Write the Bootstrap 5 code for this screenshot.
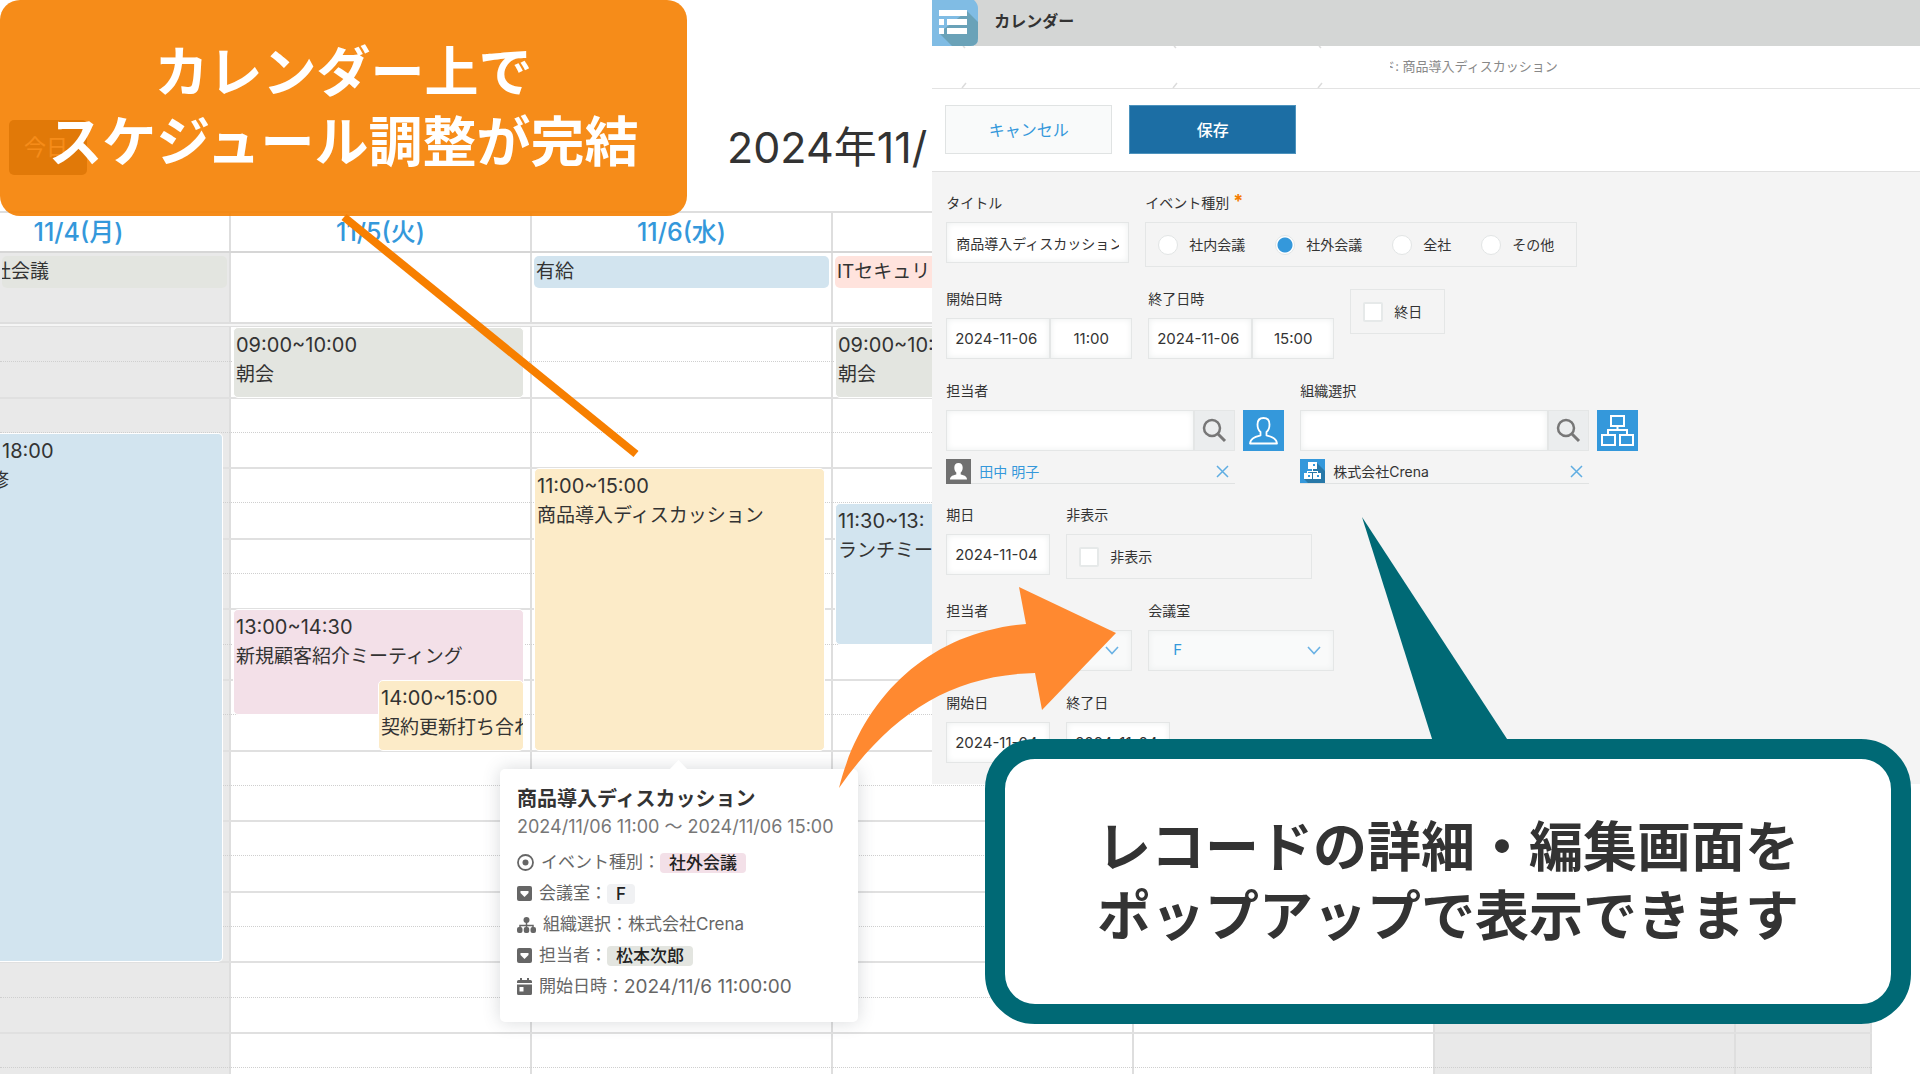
<!DOCTYPE html>
<html lang="ja">
<head>
<meta charset="utf-8">
<meta name="viewport" content="width=device-width, initial-scale=1">
<title>カレンダー</title>
<link href="https://cdn.jsdelivr.net/npm/bootstrap@5.3.0/dist/css/bootstrap.min.css" rel="stylesheet">
<style>
  :root { --line:#dedede; --accent:#3498db; --ink:#333; --teal:#006975; }
  body { font-family: Inter, "Noto Sans CJK JP", sans-serif; color: var(--ink); background:#fff; }
  .stage { min-height: 100vh; overflow: hidden; }

  /* calendar */
  .cal { width: 97.5%; }
  .cal-toolbar { height: 211px; padding-left: 9px; }
  .today-btn { width: 78px; height: 55px; margin-top: 120px; font-size: 22px; padding: 0 4px 0 0; background:#2c3e50; color:#fff; border:0; border-radius:5px; }
  .cal-title { font-size: 43px; line-height: 48px; margin: 123px 0 0 640px; font-weight: 400; white-space: nowrap; }
  .day-cols { display: grid; grid-template-columns: 231fr 301fr 301fr 301fr 301fr 301fr 136fr; }
  .day-cell { border-right: 2px solid var(--line); min-width: 0; }
  .day-cell:last-child { border-right: 0; }
  .day-off { background:#e9e9e9; }
  .day-head { height: 42px; border-top: 2px solid var(--line); border-bottom: 2px solid #d6d6d6; }
  .day-head .day-cell { text-align: center; font-size: 25px; line-height: 38px; }
  .day-head a { color: var(--accent); font-weight: 500; text-decoration: none; }
  .day-head .first-day { padding-right: 72px; }
  .allday { height: 69px; }
  .allday .day-cell { padding: 3px 2px 0 2px; }
  .cal-split { height: 5px; background:#f5f5f5; border-top: 2px solid var(--line); border-bottom: 1px solid var(--line); }
  .ev { font-size: 19px; line-height: 29px; border-radius: 5px; padding: 3px 2px 0 2px; white-space: nowrap; overflow: hidden; }
  .ev-day { height: 32px; padding-top: 1px; }
  .ev-time { font-size: 20px; }
  .ev-gray { background:#e3e5e0; } .ev-blue { background:#d2e4ef; } .ev-peach { background:#ffe3dd; }
  .ev-pink { background:#f3e0e8; } .ev-cream { background:#fcebc8; }
  .timegrid { height: 747px; }
  .slots, .time-col { display: grid; grid-template-rows: repeat(20, 1fr) 35px 6px; }
  .slots { margin-top: -1px; }
  .time-col { padding: 0 9px 0 2px; }
  .time-col .ev { grid-column: 1; border: 1px solid #fff; margin-right: -1px; }
  .ev-half { margin-left: 50%; }
  .time-col.first-day .ev { margin-left: -2px; border-left: 0; border-radius: 0 5px 5px 0; }
  .cut-word { margin-left: -12px; }
  .slots div { border-top: 1px dotted #cfcfcf; }
  .slots div.hour { border-top: 2px solid #e0e0e0; }
  .slots div:first-child { border-top: 0; }

  /* event detail popover */
  .detail { width: 358px; left: 500px; top: 769px; padding: 16px 10px 20px 17px; background:#fff; border-radius: 5px; box-shadow: 0 0 18px rgba(60,70,80,.2); font-size: 17px; color:#666; white-space: nowrap; }
  .detail-tip { left: 169px; top: -9px; }
  .detail h2 { font-size: 20px; line-height: 28px; font-weight: 700; margin: 0; color: var(--ink); }
  .detail-when { font-size: 18px; line-height: 28px; color:#777; margin-bottom: 6px; }
  .detail li { height: 31px; line-height: 31px; }
  .detail svg { margin-right: 7px; flex: none; }
  .detail-num { font-size: 19px; }
  .tagv { line-height: 20px; border-radius: 4px; padding: 0 9px; color: #222; font-weight: 500; }

  /* record dialog */
  .dialog { width: calc(51.5% - 1px); background:#f4f4f4; }
  .dialog-bar { height: 46px; background:#d4d6d5; }
  .dialog-bar h1 { font-size: 16px; line-height: 42px; height: 46px; margin: 0 0 0 16px; font-weight: 700; }
  .crumbs { height: 43px; background:#fff; border-bottom: 1px solid #e3e3e3; font-size: 13px; color:#888; padding-left: 458px; line-height: 41px; }
  .crumb-cut { width: 5px; overflow: hidden; direction: rtl; }
  .actions { height: 83px; background:#fff; border-bottom: 1px solid #e0e0e0; padding: 16px 13px; gap: 17px; }
  .actions .btn { width: 167px; height: 49px; border-radius: 0; font-size: 16px; }
  .btn-cancel, .btn-cancel:hover { background:#f9fafa; border: 1px solid #e0e3e3; color: var(--accent); }
  .btn-save, .btn-save:hover { background:#1c6ea4; border: 1px solid #4d93bd; color:#fff; font-weight: 500; }
  .rec-form { padding: 21px 14px 21px; gap: 22px; font-size: 14px; }
  .frow { gap: 16px; }
  .flabel { font-size: 14px; line-height: 20px; margin: 0 0 9px; display: block; }
  .need { color:#f57c00; font-weight: 700; font-size: 18px; line-height: 16px; vertical-align: top; }
  .fbox { height: 41px; border: 1px solid #e4e6e6; border-radius: 0; background:#fff; color: var(--ink); box-shadow: inset 0 0 6px #eceeee; font-size: 15px; padding: 0 8px; display:block; }
  .w-title { width: 183px; font-size: 14px; padding: 0 9px; }
  .w-date { width: 104px; } .w-time { width: 82px; text-align: center; }
  .w-find { width: 248px; } .w-pick { width: 338px; }
  .fgroup { height: 45px; border: 1px solid #e4e6e6; padding: 0 22px 0 12px; }
  .choice { gap: 11px; line-height: 20px; }
  .choices { gap: 30px; }
  .rad, .chk { appearance: none; width: 20px; height: 20px; margin: 0; background:#fff; border: 1px solid #e2e5e5; flex: none; }
  .rad { border-radius: 50%; }
  .rad:checked { background: radial-gradient(circle, var(--accent) 0 7px, #fff 8px); }
  .chk { border: 2px solid #e6e9e9; border-radius: 2px; }
  .w-hide { width: 246px; }
  .btn-find { width: 41px; height: 41px; background:#ebedee; border: 1px solid #e4e6e6; padding: 0; }
  .btn-blue { width: 41px; height: 41px; background: var(--accent); border: 0; padding: 0; margin-left: 8px; }
  .picked { height: 25px; width: 289px; margin-top: 8px; margin-bottom: -1px; border-bottom: 1px solid #e0e2e2; padding-right: 6px; }
  .picked svg { display:block; }
  .btn-x { border:0; background:none; padding:0; }
  .fsel { width: 186px; }
  .fsel select { appearance: none; width: 100%; background:#f9fafa; color: var(--accent); padding-left: 24px; }
  .fsel svg { right: 13px; top: 16px; }

  /* callouts */
  .call-top { width: 687px; height: 216px; border-radius: 20px; background: rgba(245,127,0,.9); color:#fff; font-size: 54px; line-height: 70px; font-weight: 700; white-space: nowrap; }
  .call-rec { width: 926px; height: 285px; right: 9px; top: 739px; border: 20px solid var(--teal); border-radius: 50px; background:#fff; font-size: 54px; line-height: 69px; font-weight: 700; white-space: nowrap; }
  .marks { pointer-events: none; }
</style>
</head>
<body>
<main class="stage position-relative">

  <section class="cal">
    <header class="cal-toolbar d-flex align-items-start">
      <button class="today-btn" type="button">今日</button>
      <h2 class="cal-title">2024年11/</h2>
    </header>

    <div class="day-cols day-head">
      <div class="day-cell first-day"><a href="#">11/4(月)</a></div>
      <div class="day-cell"><a href="#">11/5(火)</a></div>
      <div class="day-cell"><a href="#">11/6(水)</a></div>
      <div class="day-cell"></div><div class="day-cell"></div><div class="day-cell"></div><div class="day-cell"></div>
    </div>

    <div class="day-cols allday">
      <div class="day-cell day-off first-day"><div class="ev ev-day ev-gray"><div class="cut-word">社会議</div></div></div>
      <div class="day-cell"></div>
      <div class="day-cell"><div class="ev ev-day ev-blue">有給</div></div>
      <div class="day-cell"><div class="ev ev-day ev-peach">ITセキュリ</div></div>
      <div class="day-cell"></div><div class="day-cell day-off"></div><div class="day-cell day-off"></div>
    </div>
    <div class="cal-split"></div>

    <div class="timegrid day-cols position-relative">
      <div class="day-cell day-off"></div><div class="day-cell"></div><div class="day-cell"></div><div class="day-cell"></div><div class="day-cell"></div><div class="day-cell day-off"></div><div class="day-cell day-off"></div>
      <div class="slots position-absolute top-0 start-0 w-100 h-100" id="slots"></div>
      <div class="day-cols position-absolute top-0 start-0 w-100 h-100">
        <div class="time-col first-day">
          <div class="ev ev-blue" style="grid-row:4/19"><div class="ev-time">18:00</div><div class="cut-word">修</div></div>
        </div>
        <div class="time-col">
          <div class="ev ev-gray" style="grid-row:1/3"><div class="ev-time">09:00~10:00</div>朝会</div>
          <div class="ev ev-pink" style="grid-row:9/12"><div class="ev-time">13:00~14:30</div>新規顧客紹介ミーティング</div>
          <div class="ev ev-cream ev-half" style="grid-row:11/13"><div class="ev-time">14:00~15:00</div>契約更新打ち合わ</div>
        </div>
        <div class="time-col">
          <div class="ev ev-cream" style="grid-row:5/13"><div class="ev-time">11:00~15:00</div>商品導入ディスカッション</div>
        </div>
        <div class="time-col">
          <div class="ev ev-gray" style="grid-row:1/3"><div class="ev-time">09:00~10:</div>朝会</div>
          <div class="ev ev-blue" style="grid-row:6/10"><div class="ev-time">11:30~13:</div>ランチミー</div>
        </div>
      </div>
    </div>
  </section>

  <section class="detail position-absolute">
    <svg class="detail-tip position-absolute" width="19" height="10" viewBox="0 0 19 10"><path d="M0 10 9.500 0 19 10z" fill="#fff"/></svg>
    <h2>商品導入ディスカッション</h2>
    <div class="detail-when">2024/11/06 11:00 ～ 2024/11/06 15:00</div>
    <ul class="list-unstyled mb-0">
      <li class="d-flex align-items-center"><svg width="17" height="17" viewBox="0 0 17 17"><circle cx="8.500" cy="8.500" r="7.500" fill="none" stroke="#666" stroke-width="1.800"/><circle cx="8.500" cy="8.500" r="3" fill="#666"/></svg>イベント種別：<span class="tagv ev-pink">社外会議</span></li>
      <li class="d-flex align-items-center"><svg width="15" height="15" viewBox="0 0 15 15"><rect width="15" height="15" rx="2" fill="#666"/><path d="M3.500 5h8v2l-4 4-4-4z" fill="#fff"/></svg>会議室：<span class="tagv" style="background:#f0f1f3">F</span></li>
      <li class="d-flex align-items-center"><svg width="19" height="16" viewBox="0 0 19 16"><circle cx="9.500" cy="3" r="3" fill="#666"/><path d="M9.500 4v7M3 11V8.500h13V11" fill="none" stroke="#666" stroke-width="1.500"/><g fill="#666"><rect y="10" width="5.500" height="6" rx="2"/><rect x="6.750" y="10" width="5.500" height="6" rx="2"/><rect x="13.500" y="10" width="5.500" height="6" rx="2"/></g></svg>組織選択：株式会社Crena</li>
      <li class="d-flex align-items-center"><svg width="15" height="15" viewBox="0 0 15 15"><rect width="15" height="15" rx="2" fill="#666"/><path d="M3.500 5h8v2l-4 4-4-4z" fill="#fff"/></svg>担当者：<span class="tagv ev-gray">松本次郎</span></li>
      <li class="d-flex align-items-center"><svg width="15" height="17" viewBox="0 0 15 17"><path d="M3 0h2v2h5V0h2v2h1.500Q15 2 15 3.500V5H0V3.500Q0 2 1.500 2H3z" fill="#666"/><path d="M0 6.500h15v9q0 1.500-1.500 1.500h-12Q0 17 0 15.500zM2.500 9v4.500h4V9z" fill="#666" fill-rule="evenodd"/></svg>開始日時：<span class="detail-num">2024/11/6 11:00:00</span></li>
    </ul>
  </section>

  <section class="dialog position-absolute top-0 end-0">
    <header class="dialog-bar d-flex">
      <svg width="46" height="46" viewBox="0 0 46 46"><path d="M0 0h42q4 4 4 8v30q0 8-8 8H0z" fill="#80bce4"/><path d="M35 11 46 22v16q0 8-8 8H20L7 33z" fill="#6aa2b8"/><g fill="#fff"><rect x="7" y="10" width="28" height="6"/><rect x="7" y="19" width="5" height="6"/><rect x="15" y="19" width="20" height="6"/><rect x="7" y="28" width="5" height="6"/><rect x="15" y="28" width="20" height="6"/></g></svg>
      <h1>カレンダー</h1>
    </header>
    <nav class="crumbs d-flex position-relative" aria-label="breadcrumb">
      <svg class="position-absolute top-0 start-0" width="400" height="42" viewBox="0 0 400 42"><path d="M30 42 34 37M241 42l4-5M386 42l4-5M31 0l2 2M242 0l2 2M387 0l2 2" stroke="#dcdcdc" stroke-width="1.500"/></svg>
      <span class="crumb-cut">ド</span><span>: 商品導入ディスカッション</span>
    </nav>
    <div class="actions d-flex">
      <button type="button" class="btn btn-cancel">キャンセル</button>
      <button type="submit" form="rec" class="btn btn-save">保存</button>
    </div>

    <form id="rec" class="rec-form d-flex flex-column">
      <div class="frow d-flex">
        <div><label class="flabel" for="title">タイトル</label><input id="title" class="fbox w-title" type="text" value="商品導入ディスカッション"></div>
        <div role="group" aria-labelledby="kind">
          <span class="flabel" id="kind">イベント種別 <span class="need">*</span></span>
          <div class="fgroup choices d-flex align-items-center">
            <label class="choice d-flex align-items-center"><input class="rad" type="radio" name="kind">社内会議</label>
            <label class="choice d-flex align-items-center"><input class="rad" type="radio" name="kind" checked>社外会議</label>
            <label class="choice d-flex align-items-center"><input class="rad" type="radio" name="kind">全社</label>
            <label class="choice d-flex align-items-center"><input class="rad" type="radio" name="kind">その他</label>
          </div>
        </div>
      </div>

      <div class="frow d-flex align-items-start">
        <div><label class="flabel" for="sd">開始日時</label><div class="d-flex"><input id="sd" class="fbox w-date" type="text" value="2024-11-06"><input class="fbox w-time" type="text" value="11:00" aria-label="開始時刻"></div></div>
        <div><label class="flabel" for="ed">終了日時</label><div class="d-flex"><input id="ed" class="fbox w-date" type="text" value="2024-11-06"><input class="fbox w-time" type="text" value="15:00" aria-label="終了時刻"></div></div>
        <div class="fgroup d-flex align-items-center"><label class="choice d-flex align-items-center"><input class="chk" type="checkbox">終日</label></div>
      </div>

      <div class="frow d-flex">
        <div class="w-pick">
          <label class="flabel" for="who">担当者</label>
          <div class="d-flex">
            <input id="who" class="fbox w-find" type="text">
            <button class="btn-find" type="button" aria-label="検索"><svg width="26" height="26" viewBox="0 0 26 26" fill="none" stroke="#777" stroke-width="2.500"><circle cx="10" cy="10" r="8"/><path d="m16 16 7 7" stroke-width="3"/></svg></button>
            <button class="btn-blue" type="button" aria-label="ユーザー"><svg width="31" height="31" viewBox="0 0 31 31" fill="none" stroke="#fff" stroke-width="1.800" stroke-linejoin="round"><path d="M15.500 3c-4 0-6 2.500-6 6.500 0 3.500 1 6 3 7.500v3.500C7 22 2.500 23 2 28.500h27c-.5-5.500-5-6.500-10.500-8V17c2-1.500 3-4 3-7.500 0-4-2-6.500-6-6.500z"/></svg></button>
          </div>
          <div class="picked d-flex align-items-center justify-content-between">
            <a href="#" class="d-flex align-items-center gap-2 text-decoration-none" style="color:var(--accent)"><svg width="25" height="25" viewBox="0 0 25 25"><rect width="25" height="25" fill="#707070"/><path d="M12.500 4c-2.800 0-4.200 1.800-4.200 4.500 0 2.400.8 4 2 5v2c-3.300 1-6.300 1.500-6.300 5h17c0-3.500-3-4-6.300-5v-2c1.200-1 2-2.600 2-5C16.700 5.800 15.300 4 12.500 4z" fill="#fff"/></svg>田中 明子</a>
            <button class="btn-x" type="button" aria-label="削除"><svg width="13" height="13" viewBox="0 0 13 13"><path d="m1 1 11 11M12 1 1 12" stroke="#5fade2" stroke-width="1.500"/></svg></button>
          </div>
        </div>
        <div class="w-pick">
          <label class="flabel" for="org">組織選択</label>
          <div class="d-flex">
            <input id="org" class="fbox w-find" type="text">
            <button class="btn-find" type="button" aria-label="検索"><svg width="26" height="26" viewBox="0 0 26 26" fill="none" stroke="#777" stroke-width="2.500"><circle cx="10" cy="10" r="8"/><path d="m16 16 7 7" stroke-width="3"/></svg></button>
            <button class="btn-blue" type="button" aria-label="組織"><svg width="35" height="33" viewBox="0 0 35 33" fill="none" stroke="#fff" stroke-width="2"><path d="M11 2h13v10H11zM2 21h13v10H2zM20 21h13v10H20zM17.500 12v4M8 21v-5h19v5"/></svg></button>
          </div>
          <div class="picked d-flex align-items-center justify-content-between">
            <span class="d-flex align-items-center gap-2"><svg width="25" height="24" viewBox="0 0 25 24"><rect width="25" height="24" fill="#3498db"/><path d="M17 4l8 8v12H8l-4-4 8-9z" fill="#2878a8"/><g fill="#fff"><rect x="8" y="3" width="9" height="7"/><rect x="4" y="14" width="8" height="6"/><rect x="13" y="14" width="8" height="6"/><path d="M12 10h1v2h5v2h-1v-1H8v1H7v-2h5z"/></g><g fill="#3498db"><rect x="13" y="5" width="2" height="2"/><rect x="8" y="16" width="2" height="2"/><rect x="17" y="16" width="2" height="2"/></g></svg>株式会社Crena</span>
            <button class="btn-x" type="button" aria-label="削除"><svg width="13" height="13" viewBox="0 0 13 13"><path d="m1 1 11 11M12 1 1 12" stroke="#5fade2" stroke-width="1.500"/></svg></button>
          </div>
        </div>
      </div>

      <div class="frow d-flex">
        <div><label class="flabel" for="due">期日</label><input id="due" class="fbox w-date" type="text" value="2024-11-04"></div>
        <div><span class="flabel">非表示</span><div class="fgroup w-hide d-flex align-items-center"><label class="choice d-flex align-items-center"><input class="chk" type="checkbox">非表示</label></div></div>
      </div>

      <div class="frow d-flex">
        <div class="fsel"><label class="flabel" for="s1">担当者</label><div class="position-relative"><select id="s1" class="fbox"><option></option></select><svg class="position-absolute" width="14" height="9" viewBox="0 0 14 9"><path d="m1 1 6 6.500L13 1" fill="none" stroke="#6bb2e4" stroke-width="1.600"/></svg></div></div>
        <div class="fsel"><label class="flabel" for="s2">会議室</label><div class="position-relative"><select id="s2" class="fbox"><option>F</option></select><svg class="position-absolute" width="14" height="9" viewBox="0 0 14 9"><path d="m1 1 6 6.500L13 1" fill="none" stroke="#6bb2e4" stroke-width="1.600"/></svg></div></div>
      </div>

      <div class="frow d-flex">
        <div><label class="flabel" for="d1">開始日</label><input id="d1" class="fbox w-date" type="text" value="2024-11-04"></div>
        <div><label class="flabel" for="d2">終了日</label><input id="d2" class="fbox w-date" type="text" value="2024-11-04"></div>
      </div>
    </form>
  </section>

  <div class="call-top position-absolute top-0 start-0 d-flex align-items-center justify-content-center text-center">カレンダー上で<br>スケジュール調整が完結</div>

  <svg class="marks position-absolute top-0 start-0" width="1920" height="1080" viewBox="0 0 1920 1080">
    <path d="M344 217 636 454" stroke="#f77f00" stroke-width="8"/>
    <path d="M839 788C862 696 930 632 1026 624L1019 587 1116 633 1042 710 1035 673C950 675 890 715 839 788z" fill="#ff8930"/>
    <path d="M1362 517 1433 742H1509z" fill="#006975"/>
  </svg>

  <div class="call-rec position-absolute d-flex align-items-center justify-content-center text-center">レコードの詳細・編集画面を<br>ポップアップで表示できます</div>
</main>

<script src="https://cdn.jsdelivr.net/npm/bootstrap@5.3.0/dist/js/bootstrap.bundle.min.js"></script>
<script>
  // one row for each half hour; the full hours get a solid rule
  const slots = document.getElementById('slots');
  for (let i = 0; i < 22; i++) {
    const row = document.createElement('div');
    if (i % 2 === 0) row.className = 'hour';
    slots.append(row);
  }
</script>
</body>
</html>
